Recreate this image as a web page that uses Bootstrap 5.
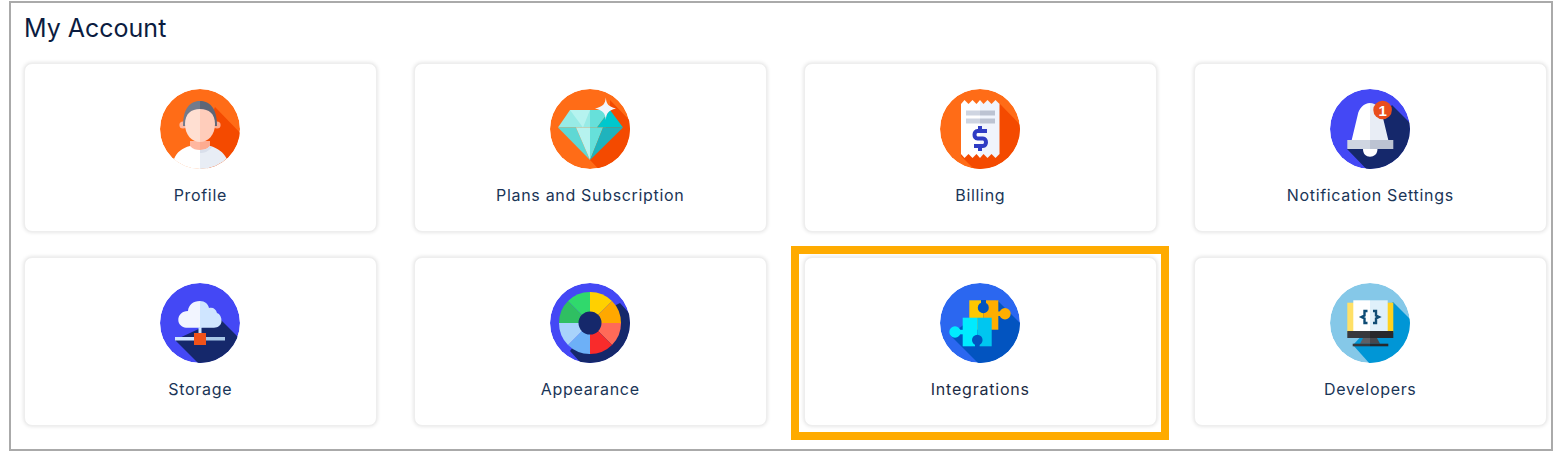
<!DOCTYPE html>
<html lang="en">
<head>
<meta charset="utf-8">
<title>My Account</title>
<link href="https://cdn.jsdelivr.net/npm/bootstrap@5.3.0/dist/css/bootstrap.min.css" rel="stylesheet">
<style>
html,body{background:#fff;height:451px;overflow:hidden}
body{font-family:"Inter","Liberation Sans",sans-serif}
.acct-frame{position:relative;margin:1px 10px 0 9px;height:450px;border:2px solid #aaa;padding:0 4px 0 13px}
.acct-title{font-size:25px;line-height:32px;font-weight:400;color:#0b1c3f;margin:9px 0 19px}
.acct-grid{display:grid;grid-template-columns:repeat(4,352.6px);column-gap:37.4px;row-gap:25px}
.acct-tile{height:169px;border:1px solid #eee;border-radius:8px;box-shadow:0 0 4px rgba(0,0,0,.14);padding-top:25px}
.acct-tile svg{width:80px;height:80px;display:block}
.acct-label{font-size:16px;line-height:20px;color:#1a3557;margin-top:16px;letter-spacing:.68px}
.acct-label-alt{color:#1c2b45;letter-spacing:.8px}
.acct-mark{position:absolute;left:780px;top:243px;width:378px;height:194px;border:8px solid #ffab00;pointer-events:none}
</style>
</head>
<body>
<svg width="0" height="0" class="position-absolute"><defs><clipPath id="cc"><circle cx="40" cy="40" r="40"/></clipPath></defs></svg>
<div class="acct-frame">
  <h1 class="acct-title">My Account</h1>
  <div class="acct-grid">

    <div class="card acct-tile align-items-center">
      <svg viewBox="0 0 80 80"><g clip-path="url(#cc)">
        <circle cx="40" cy="40" r="40" fill="#ff6c17"/>
        <path d="M55 18L85 49V90H50L40 50Z" fill="#f44a00"/>
        <path d="M14 70C17 63 22 59 30 57L40 56V90H0V70Z" fill="#fff"/>
        <path d="M40 56L50 57C58 59 63 63 67 70L90 90H40Z" fill="#e8edf5"/>
        <path d="M30 52H40V61C36 61 33 60 30 57Z" fill="#ffb79f"/>
        <path d="M40 52H50V57C47 60 44 61 40 61Z" fill="#fdab90"/>
        <path d="M40 61C44 61 47 60 50 57L52 58C48 63 44 64 40 64Z" fill="#d9dfeb"/>
        <circle cx="23" cy="36" r="3.6" fill="#ffb79f"/><circle cx="57" cy="36" r="3.6" fill="#fdab90"/>
        <path d="M23 37C23 18 31 12 40 12V37Z" fill="#737b8c"/>
        <path d="M57 37C57 18 49 12 40 12V37Z" fill="#5f6677"/>
        <path d="M40 20C31 20 25 25 25 35C25 46 32 53 40 53Z" fill="#ffdfd2"/>
        <path d="M40 20C49 20 55 25 55 35C55 46 48 53 40 53Z" fill="#ffcdbb"/>
      </g></svg>
      <div class="acct-label">Profile</div>
    </div>

    <div class="card acct-tile align-items-center">
      <svg viewBox="0 0 80 80"><g clip-path="url(#cc)">
        <circle cx="40" cy="40" r="40" fill="#ff6c17"/>
        <path d="M60 11L90 42V90H58L40 71L60 30Z" fill="#f44a00"/>
        <path d="M8 38.500L20 21H40V38.500Z" fill="#98ebe6"/>
        <path d="M20 21H40L33 38.500Z" fill="#b6f3ef"/>
        <path d="M40 21H60L47 38.500H40Z" fill="#66e0da"/>
        <path d="M47 38.500L60 21L73 38.500Z" fill="#00c8cd"/>
        <path d="M8 38.500H26L40 71Z" fill="#5fd8d4"/>
        <path d="M26 38.500H40V71Z" fill="#b6f3ef"/>
        <path d="M40 38.500H53L40 71Z" fill="#66e0da"/>
        <path d="M53 38.500H73L40 71Z" fill="#1fb3bd"/>
        <path d="M55.800 8.500C56.500 15 58 17.500 66 19.500C58 21.500 56.500 24 55.800 31C55 24 53.500 21.500 45 19.500C53.500 17.500 55 15 55.800 8.500Z" fill="#f1f5fb"/>
      </g></svg>
      <div class="acct-label">Plans and Subscription</div>
    </div>

    <div class="card acct-tile align-items-center">
      <svg viewBox="0 0 80 80"><g clip-path="url(#cc)">
        <circle cx="40" cy="40" r="40" fill="#ff6c17"/>
        <path d="M60 15L90 46V90H44L21 67L40 20Z" fill="#f44a00"/>
        <path d="M21 15L24.500 11L28.500 15L32.500 11L36.500 15L40 11V69L36.500 65L32.500 69L28.500 65L24.500 69L21 65Z" fill="#fff"/>
        <path d="M40 11L43.500 15L47.500 11L51.500 15L55.500 11L59.500 15V65L55.500 69L51.500 65L47.500 69L43.500 65L40 69Z" fill="#f0f4fc"/>
        <rect x="26" y="21.500" width="14" height="5" fill="#cfd5e1"/><rect x="40" y="21.500" width="15" height="5" fill="#bcc3d2"/>
        <rect x="26" y="29.500" width="14" height="5" fill="#cfd5e1"/><rect x="40" y="29.500" width="15" height="5" fill="#bcc3d2"/>
        <path d="M47 42H37.500C33.500 42 33.500 49.500 37.500 49.500H43C47 49.500 47 57 43 57H34M40 37V42M40 57V62" fill="none" stroke="#2f3cc4" stroke-width="4"/>
      </g></svg>
      <div class="acct-label">Billing</div>
    </div>

    <div class="card acct-tile align-items-center">
      <svg viewBox="0 0 80 80"><g clip-path="url(#cc)">
        <circle cx="40" cy="40" r="40" fill="#4448f5"/>
        <path d="M62 16L90 44V90H46L17 60L40 40Z" fill="#15286b"/>
        <path d="M21.700 51L27.700 26C29 19 34 14 40 14V51Z" fill="#fff"/>
        <path d="M58.300 51L52.300 26C51 19 46 14 40 14V51Z" fill="#e8edf5"/>
        <path d="M33 60H47.500C47.500 65 44 67.700 40 67.700C36 67.700 33 65 33 60Z" fill="#fff"/>
        <rect x="17.300" y="51" width="22.700" height="9" fill="#cfd5e1"/><rect x="40" y="51" width="23.300" height="9" fill="#bcc3d2"/>
        <circle cx="52.600" cy="21" r="9.300" fill="#e94e1d"/>
      </g>
      <text x="52.600" y="26.500" text-anchor="middle" font-family="Liberation Sans,sans-serif" font-weight="700" font-size="15" fill="#fff">1</text></svg>
      <div class="acct-label">Notification Settings</div>
    </div>

    <div class="card acct-tile align-items-center">
      <svg viewBox="0 0 80 80"><g clip-path="url(#cc)">
        <circle cx="40" cy="40" r="40" fill="#4448f5"/>
        <path d="M60 36L90 66V90H48L15 57Z" fill="#15286b"/>
        <path d="M40 18C33 18 28.500 22 28 28C22 28 18.300 32 18.300 37C18.300 41 22 44.700 26 44.700H40Z" fill="#f2f5ff"/>
        <path d="M40 18C45 18 48 21 49 25C53 24 56 26 57 30C60 31 61.500 34 61.500 38C61.500 42 58 44.700 54 44.700H40Z" fill="#cfe5ff"/>
        <rect x="38.500" y="44" width="3" height="12" fill="#cfe5ff"/>
        <rect x="15" y="54" width="25" height="3.500" fill="#cfe5ff"/><rect x="40" y="54" width="25" height="3.500" fill="#a8c8e8"/>
        <rect x="34" y="50" width="12" height="12" fill="#f0521a"/>
      </g></svg>
      <div class="acct-label">Storage</div>
    </div>

    <div class="card acct-tile align-items-center">
      <svg viewBox="0 0 80 80"><g clip-path="url(#cc)">
        <circle cx="40" cy="40" r="40" fill="#4448f5"/>
        <path d="M70 20L90 42V90H40L20 68L50 30Z" fill="#15286b"/>
        <path d="M40 9A31 31 0 0 1 62 18L40 40Z" fill="#ffd000"/>
        <path d="M62 18A31 31 0 0 1 71 40H40Z" fill="#ffa800"/>
        <path d="M71 40A31 31 0 0 1 62 62L40 40Z" fill="#ff6a58"/>
        <path d="M62 62A31 31 0 0 1 40 71V40Z" fill="#f92b2b"/>
        <path d="M40 71A31 31 0 0 1 18 62L40 40Z" fill="#6db0f7"/>
        <path d="M18 62A31 31 0 0 1 9 40H40Z" fill="#a8d3fb"/>
        <path d="M9 40A31 31 0 0 1 18 18L40 40Z" fill="#2fbf62"/>
        <path d="M18 18A31 31 0 0 1 40 9V40Z" fill="#30d96c"/>
        <circle cx="40" cy="40" r="11.500" fill="#15286b"/>
      </g></svg>
      <div class="acct-label">Appearance</div>
    </div>

    <div class="card acct-tile align-items-center">
      <svg viewBox="0 0 80 80"><g clip-path="url(#cc)">
        <circle cx="40" cy="40" r="40" fill="#2b67f0"/>
        <path d="M57 17L90 50V90H48L10 52Z" fill="#0254c0"/>
        <rect x="29.300" y="17.300" width="14" height="29.400" fill="#ffc800"/>
        <rect x="43.300" y="17.300" width="15" height="29.400" fill="#ffae00"/>
        <circle cx="65" cy="30.700" r="5.700" fill="#ffae00"/>
        <rect x="57" y="28.500" width="5" height="4.500" fill="#ffae00"/>
        <rect x="41" y="17" width="5" height="6" fill="#0254c0"/>
        <circle cx="43.300" cy="24.700" r="5.500" fill="#0254c0"/>
        <rect x="22.700" y="34.700" width="14.600" height="28.600" fill="#00ebff"/>
        <rect x="37.300" y="34.700" width="14.400" height="28.600" fill="#00c6f0"/>
        <circle cx="15" cy="49" r="5.700" fill="#00ebff"/>
        <rect x="18" y="46.800" width="6" height="4.500" fill="#00ebff"/>
        <circle cx="37.300" cy="57" r="5.300" fill="#0254c0"/>
        <rect x="35" y="58" width="4.600" height="6" fill="#0254c0"/>
      </g></svg>
      <div class="acct-label acct-label-alt">Integrations</div>
    </div>

    <div class="card acct-tile align-items-center">
      <svg viewBox="0 0 80 80"><g clip-path="url(#cc)">
        <circle cx="40" cy="40" r="40" fill="#85c8e8"/>
        <path d="M63 19L90 46V90H48L23 62Z" fill="#0096d6"/>
        <rect x="17.300" y="19.700" width="23" height="30" fill="#ffe066"/>
        <rect x="40" y="19.700" width="23.300" height="30" fill="#ffd21f"/>
        <rect x="23.300" y="17.300" width="16.700" height="31" fill="#fff"/>
        <rect x="40" y="17.300" width="17.700" height="31" fill="#dff0fa"/>
        <rect x="17.300" y="48" width="22.700" height="7" fill="#37383d"/><rect x="40" y="48" width="23.300" height="7" fill="#27282c"/>
        <path d="M33 55H40V60.700H30Z" fill="#5e5f66"/><path d="M40 55H47L50 60.700H40Z" fill="#46474d"/>
        <rect x="22.700" y="60.700" width="17.300" height="2.600" fill="#37383d"/><rect x="40" y="60.700" width="18.300" height="2.600" fill="#27282c"/>
        <path d="M37.500 28H34.500V32.500L31.500 34L34.500 35.500V40H37.500M43 28H46V32.500L49 34L46 35.500V40H43" fill="none" stroke="#0f4c75" stroke-width="2.400"/>
      </g></svg>
      <div class="acct-label">Developers</div>
    </div>
  </div>
  <div class="acct-mark"></div>
</div>
<script src="https://cdn.jsdelivr.net/npm/bootstrap@5.3.0/dist/js/bootstrap.bundle.min.js"></script>
</body>
</html>
